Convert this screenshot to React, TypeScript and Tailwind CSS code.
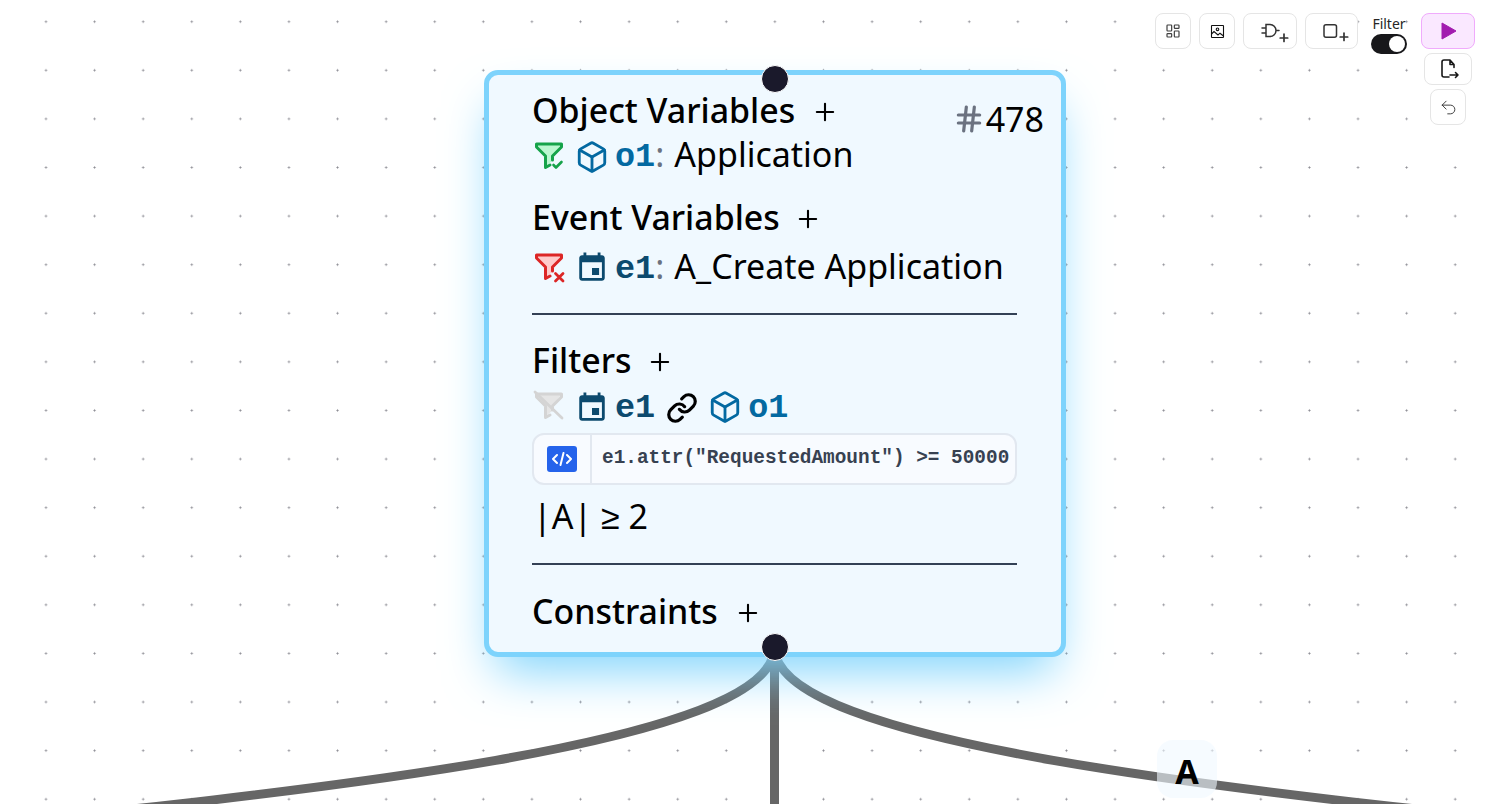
import { Box, Hash, LayoutDashboard, Link, Plus, Undo2 } from "lucide-react";

const noto = "font-['Noto_Sans',sans-serif]";
const mono = "font-['Liberation_Mono',monospace]";

function Funnel({ stroke, fill, badge, className }: { stroke: string; fill: string; badge: "check" | "x" | "off"; className: string }) {
  return (
    <svg width="32" height="32" viewBox="0 0 32 32" fill="none" className={`shrink-0 ml-[1px] ${className}`}>
      <path d="M4 5h24l-9 11v5l-6 5V16z" fill={fill} />
      <path
        d="M3.500 4H28.500V7L19.500 16V20M3.500 4V7L12.500 16V27.500L17 25"
        stroke={stroke}
        strokeWidth="3"
        strokeLinejoin="round"
        strokeLinecap="round"
      />
      {badge === "check" && <path d="M20.500 25l2.500 2.500 5.500-5.500" stroke={stroke} strokeWidth="2.600" strokeLinecap="round" strokeLinejoin="round" />}
      {badge === "x" && <path d="M22.500 22.500l7.500 7.500M30 22.500l-7.500 7.500" stroke={stroke} strokeWidth="2.800" strokeLinecap="round" />}
      {badge === "off" && <path d="M2 2l27 26" stroke={stroke} strokeWidth="2.800" strokeLinecap="round" />}
    </svg>
  );
}

function EventIcon() {
  return (
    <svg width="34" height="34" viewBox="0 0 24 24" fill="#0c4a6e" className="shrink-0 translate-y-[2px]">
      <path d="M17 12h-5v5h5v-5zM16 1v2H8V1H6v2H5c-1.110 0-1.990.9-1.990 2L3 19c0 1.100.89 2 2 2h14c1.100 0 2-.9 2-2V5c0-1.100-.9-2-2-2h-1V1h-2zm3 18H5V8h14v11z" />
    </svg>
  );
}

function Heading({ children, gap, className = "" }: { children: string; gap: string; className?: string }) {
  return (
    <div className={`flex items-center ${gap} text-[33.900px] leading-[44px] font-medium text-black ${className}`}>
      <span>{children}</span>
      <Plus size={28} strokeWidth={1.800} className="text-black mt-1" />
    </div>
  );
}

function Divider({ className }: { className: string }) {
  return <div className={`h-0.5 bg-[#334155] ${className}`} />;
}

function VarName({ color, name, className }: { color: string; name: string; className: string }) {
  return <span className={`block ${mono} font-bold text-[33.500px] ${className} ${color}`}>{name}</span>;
}

export default function App() {
  return (
    <div className={`relative w-[1492px] h-[804px] overflow-hidden bg-white ${noto} bg-[radial-gradient(circle,#8a8a92_0.7px,transparent_1.4px)] bg-[length:48.6px_48.6px] bg-[position:21.7px_-2.6px]`}>
      <svg width="1492" height="804" className="absolute inset-0" fill="none">
        <path d="M774.500 647C774.500 832 2416 832 2416 985" stroke="#666666" strokeWidth="9" />
        <path d="M774.500 647C774.500 832 -867 832 -867 985" stroke="#666666" strokeWidth="9" />
        <path d="M774.500 647V804" stroke="#666666" strokeWidth="9" />
      </svg>

      <div className="absolute left-[1157px] top-[740px] w-[60px] h-[58px] rounded-2xl bg-[#f0f9ff]/60 flex items-center justify-center text-[34px] font-bold text-black leading-none pt-1">
        A
      </div>

      {/* card */}
      <div className="absolute left-[484px] top-[70px] w-[582px] h-[587px] rounded-[14px] border-[5px] border-[#7dd3fc] bg-[#f0f9ff] shadow-[0_25px_50px_-12px_#7dd3fc] pl-[43px] pr-[44px] pt-[13px]">
        <div className="absolute right-[17px] top-[27px] flex items-center text-[34px] leading-none text-black">
          <Hash size={32} strokeWidth={2.400} className="text-[#6b7280] mr-[-2px]" />
          <span className="ml-[3px]">478</span>
        </div>
        <Heading gap="gap-4">Object Variables</Heading>
        <div className="flex items-center h-[44px] text-[34px] text-black">
          <Funnel stroke="#16a34a" fill="#bbf7d0" badge="check" className="translate-y-[2px]" />
          <Box size={34} strokeWidth={2} className="text-[#0369a1] ml-[10px] translate-y-[3px]" />
          <span className="ml-[6px]"><VarName color="text-[#0369a1]" name="o1" className="translate-y-[3px]" /></span>
          <span className="text-[#6b7280]">:</span>
          <span className="ml-[10px]">Application</span>
        </div>
        <Heading gap="gap-[14px]" className="mt-[19px]">Event Variables</Heading>
        <div className="flex items-center h-[44px] mt-[5px] text-[34px] text-black">
          <Funnel stroke="#dc2626" fill="#fecaca" badge="x" className="translate-y-[1px]" />
          <span className="ml-[10px]"><EventIcon /></span>
          <span className="ml-[6px]"><VarName color="text-[#0c4a6e]" name="e1" className="translate-y-[3px]" /></span>
          <span className="text-[#6b7280]">:</span>
          <span className="ml-[10px]">A_Create Application</span>
        </div>
        <Divider className="mt-[25px]" />
        <Heading gap="gap-[15px]" className="mt-[23px]">Filters</Heading>
        <div className="flex items-center h-[44px] mt-[2px] text-[34px] text-black">
          <Funnel stroke="#d4d4d4" fill="#e5e5e5" badge="off" className="translate-y-0" />
          <span className="ml-[10px]"><EventIcon /></span>
          <span className="ml-[6px]"><VarName color="text-[#0c4a6e]" name="e1" className="translate-y-[2px]" /></span>
          <Link size={32} strokeWidth={2.400} className="text-black ml-[11px] translate-y-[2px]" />
          <Box size={34} strokeWidth={2} className="text-[#0369a1] ml-[10px] translate-y-[1px]" />
          <span className="ml-[6px]"><VarName color="text-[#0369a1]" name="o1" className="translate-y-[2px]" /></span>
        </div>
        <div className="flex h-[52px] mt-[5px] rounded-xl border-2 border-[#e2e8f0] bg-[#f8fbff] overflow-hidden">
          <div className="w-[58px] border-r-2 border-[#e2e8f0] flex items-center justify-center">
            <div className="w-[30px] h-[26px] rounded-[3px] bg-[#2563eb] flex items-center justify-center">
              <svg width="22" height="14" viewBox="0 0 22 14" fill="none" stroke="white" strokeWidth="2" strokeLinecap="round" strokeLinejoin="round">
                <path d="M6 3L2 7l4 4M16 3l4 4-4 4M12.500 1L9.500 13" />
              </svg>
            </div>
          </div>
          <div className={`${mono} font-bold text-[19.400px] leading-[47px] text-[#374151] pl-[10px] whitespace-nowrap`}>
            e1.attr("RequestedAmount") &gt;= 50000
          </div>
        </div>
        <div className="text-[34px] leading-[46px] text-black mt-2 pl-[1px]">|A| ≥ 2</div>
        <Divider className="mt-6" />
        <Heading gap="gap-4" className="mt-6">Constraints</Heading>
      </div>

      {/* handles */}
      <div className="absolute left-[761px] top-[65px] w-7 h-7 rounded-full bg-[#1a192b] border border-white" />
      <div className="absolute left-[761px] top-[633px] w-7 h-7 rounded-full bg-[#1a192b] border border-white" />

      {/* toolbar */}
      <div className="absolute left-[1155px] top-[13px] flex items-start">
        <button className="w-9 h-9 rounded-lg border border-[#e5e5e5] bg-white flex items-center justify-center">
          <LayoutDashboard size={16} strokeWidth={1.800} className="text-[#404040]" />
        </button>
        <button className="ml-2 w-9 h-9 rounded-lg border border-[#e5e5e5] bg-white flex items-center justify-center">
          <svg width="15" height="15" viewBox="0 0 15 15" fill="none" stroke="#111" strokeWidth="1.100">
            <rect x="1.500" y="1.500" width="12" height="12" rx="0.500" />
            <circle cx="7.500" cy="5.300" r="1.300" />
            <path d="M1.500 10l2.500-2.500 4 3.500 2-1.800 3.500 2.800" />
          </svg>
        </button>
        <button className="ml-2 w-[54px] h-9 rounded-lg border border-[#e5e5e5] bg-white relative">
          <svg width="30" height="24" viewBox="0 0 30 24" fill="none" stroke="#333" strokeWidth="1.500" strokeLinecap="round" className="absolute left-[17px] top-[9px]">
            <path d="M5 1.500h4a6 6 0 010 12H5zM1 5h4M1 10h4M15 7.500h3" />
            <path d="M23 11v7.500M19.200 15h7.500" strokeWidth="1.700" />
          </svg>
        </button>
        <button className="ml-2 w-[53px] h-9 rounded-lg border border-[#e5e5e5] bg-white relative">
          <svg width="30" height="24" viewBox="0 0 30 24" fill="none" stroke="#333" strokeWidth="1.500" strokeLinecap="round" className="absolute left-[17px] top-[10px]">
            <rect x="1" y="0.800" width="12.500" height="12.500" rx="2" />
            <path d="M21 9v7.500M17.200 13h7.500" strokeWidth="1.700" />
          </svg>
        </button>
        <div className="ml-[13px] w-9 flex flex-col items-center">
          <div className="text-[14px] leading-[20px] text-[#262626] mt-[1px]">Filter</div>
          <div className="w-9 h-5 rounded-full bg-[#18181b] flex items-center justify-end pr-[2px]">
            <div className="w-4 h-4 rounded-full bg-white" />
          </div>
        </div>
        <div className="ml-[14px] w-[54px] flex flex-col items-center">
          <button className="w-[54px] h-9 rounded-lg border border-[#f0abfc] bg-[#fae8ff] flex items-center justify-center">
            <svg width="16" height="18" viewBox="0 0 16 18" className="ml-[2px]"><path d="M1 1L15 9 1 17z" fill="#a21caf" stroke="#a21caf" /></svg>
          </button>
          <button className="mt-1 w-12 h-8 rounded-lg border border-[#e5e5e5] bg-white flex items-center justify-center">
            <svg width="20" height="20" viewBox="0 0 20 20" fill="none" stroke="#171717" strokeWidth="1.600" strokeLinecap="round" strokeLinejoin="round" className="ml-1">
              <path d="M14 8.500V5.500L10 1H4a2 2 0 00-2 2v13a2 2 0 002 2h5M10 1v4.500h4M10 16h8M15.500 13.500L18 16l-2.500 2.500" />
            </svg>
          </button>
          <button className="mt-1 w-9 h-9 rounded-lg border border-[#e5e5e5] bg-white flex items-center justify-center">
            <Undo2 size={19} strokeWidth={1.100} className="text-[#262626]" />
          </button>
        </div>
      </div>
    </div>
  );
}
